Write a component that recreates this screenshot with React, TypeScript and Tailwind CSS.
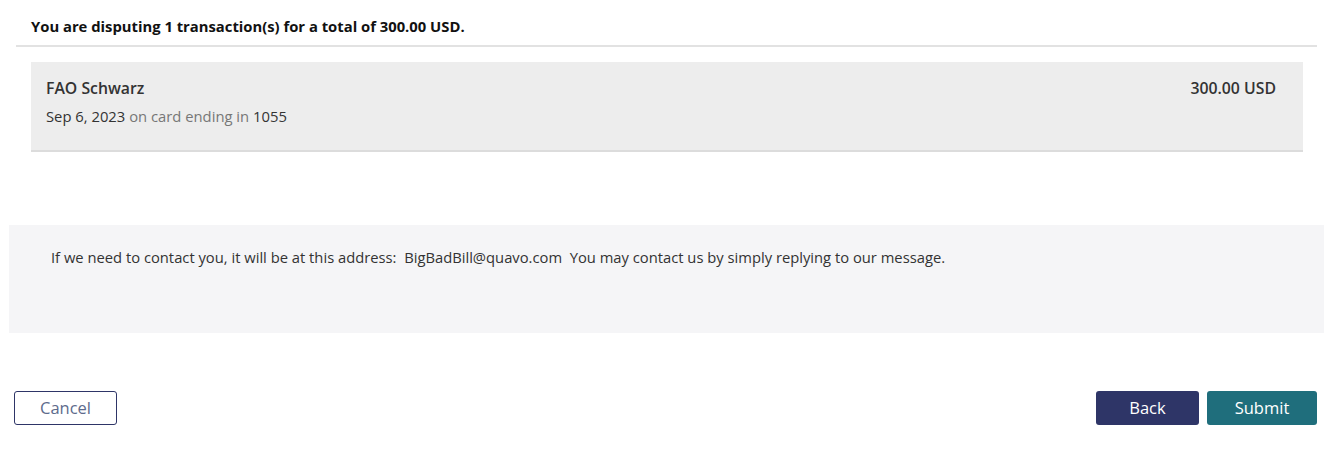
import React from 'react';

interface Transaction {
  merchant: string;
  date: string;
  cardLast4: string;
  amount: string;
}

const transactions: Transaction[] = [
  { merchant: 'FAO Schwarz', date: 'Sep 6, 2023', cardLast4: '1055', amount: '300.00 USD' },
];

function TransactionRow({ tx }: { tx: Transaction }) {
  return (
    <div className="flex justify-between bg-[#ededed] border-b-2 border-[#dcdcdc] pl-[15px] pr-[27px] pt-4 pb-6">
      <div className="flex flex-col gap-2">
        <div className="text-[15.8px] leading-5 font-semibold text-[#333]">{tx.merchant}</div>
        <div className="text-[14.8px] leading-5 text-[#333]">
          {tx.date} <span className="text-[#777]">on card ending in</span> {tx.cardLast4}
        </div>
      </div>
      <div className="text-[15.8px] leading-5 font-semibold text-[#333]">{tx.amount}</div>
    </div>
  );
}

export default function App() {
  return (
    <div className="w-[1333px] min-h-[453px] bg-white font-['Open_Sans',sans-serif] text-[#222]">
      {/* summary header */}
      <div className="pt-4 pb-[9px] pl-[31px] text-[14.8px] leading-5 font-bold text-[#111]">
        You are disputing 1 transaction(s) for a total of 300.00 USD.
      </div>
      <div className="mx-4 border-t-2 border-[#e2e2e2]" />

      <div className="mt-[15px] ml-[31px] mr-[30px]">
        {transactions.map((tx) => (
          <TransactionRow key={tx.merchant} tx={tx} />
        ))}
      </div>

      {/* contact info */}
      <div className="mt-[73px] ml-[9px] mr-[9px] h-[108px] bg-[#f5f5f7] pl-[42px] pt-[22px]">
        <p className="text-[14.75px] leading-5 text-[#333] whitespace-pre">
          If we need to contact you, it will be at this address:  BigBadBill@quavo.com  You may contact us by simply replying to our message.
        </p>
      </div>

      {/* actions */}
      <div className="mt-[58px] flex justify-between pl-[14px] pr-4">
        <button className="w-[103px] h-[34px] rounded-[3px] border border-[#2e3567] bg-white text-[16.5px] text-[#5d6b8c]">
          Cancel
        </button>
        <div className="flex gap-2">
          <button className="w-[103px] h-[34px] rounded-[3px] bg-[#2e3567] text-[16.5px] text-white">
            Back
          </button>
          <button className="w-[110px] h-[34px] rounded-[3px] bg-[#1f6e7c] text-[16.5px] text-white">
            Submit
          </button>
        </div>
      </div>
    </div>
  );
}
